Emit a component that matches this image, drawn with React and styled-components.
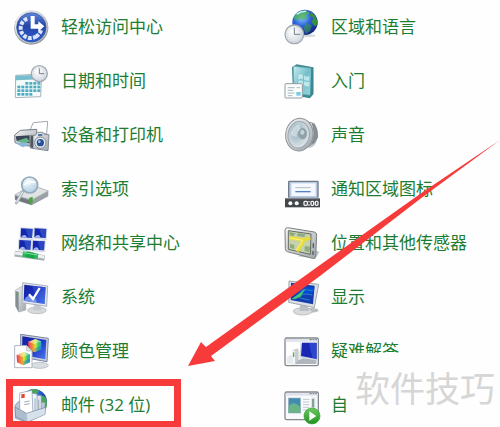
import React from 'react';
import styled, { createGlobalStyle } from 'styled-components';

const GlobalStyle = createGlobalStyle`
    *,
    *::after {
        box-sizing: border-box;
    }

    body {
        margin: 0;
        background: #fff;
        font-family: 'Open Sans', 'Noto Sans CJK SC', sans-serif;
    }
`;

const PageStyled = styled.main`
    position: relative;
    height: 100vh;
    overflow: hidden;
    background: #fefefe;
`;

const ListStyled = styled.ul`
    display: grid;
    grid-template-columns: 54% 46%;
    grid-auto-rows: 54px;
    margin: 0;
    padding: 0;
    list-style: none;
`;

const ItemStyled = styled.li`
    position: relative;
    display: flex;
    align-items: center;
    padding-left: 14px;

    ${({ $marked }) => $marked && `
        &::after {
            content: '';
            position: absolute;
            top: 1px;
            bottom: 4px;
            left: 6px;
            width: 175px;
            border: 7px solid #f73a3a;
            pointer-events: none;
        }
    `}
`;

const LinkStyled = styled.a`
    display: flex;
    align-items: center;
    gap: 12px;
    color: #1c7d31;
    font-size: 17px;
    line-height: 24px;
    white-space: nowrap;
    text-decoration: none;

    &:hover {
        text-decoration: underline;
    }
`;

const IconStyled = styled.svg`
    flex: none;
    width: 35px;
    height: 35px;
    overflow: visible;
`;

const GradientsStyled = styled.svg`
    position: absolute;
    width: 0;
    height: 0;
`;

const ArrowStyled = styled.svg`
    position: absolute;
    top: 0;
    left: 0;
    width: 500px;
    height: 427px;
    pointer-events: none;
`;

const WatermarkStyled = styled.div`
    position: absolute;
    right: 0;
    bottom: 0;
    width: 151px;
    height: 74px;
    padding-left: 6px;
    background: #fefefe;
    color: #d6d6d6;
    font-size: 35px;
    line-height: 72px;
    white-space: nowrap;
`;

function Gradients() {
    return (
        <GradientsStyled aria-hidden="true">
            <defs>
                <linearGradient id="silver" x1="0" y1="0" x2="1" y2="1">
                    <stop offset="0" stopColor="#f6f7f8" />
                    <stop offset="1" stopColor="#9fa5ab" />
                </linearGradient>
                <linearGradient id="screen" x1="0" y1="0" x2="1" y2="1">
                    <stop offset="0" stopColor="#16209a" />
                    <stop offset="0.5" stopColor="#1c32c4" />
                    <stop offset="1" stopColor="#4f7df0" />
                </linearGradient>
                <linearGradient id="blueDisc" x1="0" y1="0" x2="0" y2="1">
                    <stop offset="0" stopColor="#5f86d8" />
                    <stop offset="0.45" stopColor="#2546a8" />
                    <stop offset="1" stopColor="#2c5cd0" />
                </linearGradient>
                <radialGradient id="globe" cx="0.38" cy="0.3" r="0.75">
                    <stop offset="0" stopColor="#8fd4ff" />
                    <stop offset="0.45" stopColor="#2d62dc" />
                    <stop offset="1" stopColor="#101e7c" />
                </radialGradient>
                <radialGradient id="dial" cx="0.4" cy="0.35" r="0.7">
                    <stop offset="0" stopColor="#ffffff" />
                    <stop offset="1" stopColor="#ced6de" />
                </radialGradient>
                <linearGradient id="teal" x1="0" y1="0" x2="1" y2="1">
                    <stop offset="0" stopColor="#c9ecef" />
                    <stop offset="0.5" stopColor="#74bfca" />
                    <stop offset="1" stopColor="#98d4dc" />
                </linearGradient>
                <linearGradient id="rainbow" x1="0" y1="0" x2="1" y2="0">
                    <stop offset="0" stopColor="#e6336c" />
                    <stop offset="0.3" stopColor="#f2a52c" />
                    <stop offset="0.55" stopColor="#d9e83a" />
                    <stop offset="0.8" stopColor="#35c765" />
                    <stop offset="1" stopColor="#27a5e2" />
                </linearGradient>
                <radialGradient id="cone" cx="0.4" cy="0.4" r="0.6">
                    <stop offset="0" stopColor="#8da3af" />
                    <stop offset="0.5" stopColor="#b6c8d1" />
                    <stop offset="1" stopColor="#dbe4e9" />
                </radialGradient>
                <radialGradient id="lens" cx="0.4" cy="0.3" r="0.7">
                    <stop offset="0" stopColor="#f4fbff" />
                    <stop offset="1" stopColor="#a9cbe6" />
                </radialGradient>
                <linearGradient id="play" x1="0" y1="0" x2="0" y2="1">
                    <stop offset="0" stopColor="#67cb5a" />
                    <stop offset="1" stopColor="#219021" />
                </linearGradient>
            </defs>
        </GradientsStyled>
    )
}

function Clock({ cx, cy, r }) {
    return (
        <g>
            <circle cx={cx} cy={cy} r={r} fill="url(#dial)" stroke="#a2a9b0" strokeWidth="4" />
            <circle cx={cx} cy={cy} r={r - 6} fill="none" stroke="#a9b4be" strokeWidth="2" strokeDasharray="2 8" />
            <path d={`M${cx} ${cy - r + 8}V${cy}H${cx + r - 10}`} fill="none" stroke="#75818d" strokeWidth="3" />
        </g>
    )
}

function EaseIcon() {
    return (
        <>
            <circle cx="52" cy="53" r="51" fill="#8c9198" />
            <circle cx="52" cy="51" r="50" fill="url(#silver)" />
            <circle cx="52" cy="52" r="44" fill="url(#blueDisc)" stroke="#3156ae" strokeWidth="2" />
            <path d="M67 79A30 30 0 1 1 40 26" fill="none" stroke="#dce6f8" strokeWidth="12" strokeDasharray="11 4" />
            <path d="M81 61A30 30 0 0 1 65 80" fill="none" stroke="#dce6f8" strokeWidth="12" strokeDasharray="10 4" />
            <path d="M50 18H62V43H73V34L91 49L73 65V56H50Z" fill="#fff" />
        </>
    )
}

function CalendarIcon() {
    const rows = [0, 1, 2, 3];
    const cols = [0, 1, 2, 3, 4, 5];

    return (
        <>
            <path d="M5 34L83 30L80 98L4 101Z" fill="#f4fbfc" stroke="#a9b4bb" strokeWidth="3" />
            <path d="M6 35L82 32V46L5 49Z" fill="#76bdce" />
            {rows.map((row) => cols.slice(row === 0 ? 2 : 0, row === 3 ? 4 : 6).map((col) => (
                <rect key={`${row}-${col}`} x={10 + col * 12} y={54 + row * 11} width="9" height="8" fill="#4fabc0" />
            )))}
            <Clock cx={76} cy={29} r={24} />
        </>
    )
}

function PrinterIcon() {
    return (
        <>
            <path d="M44 45L58 14L101 10L98 47Z" fill="#fff" stroke="#a3a8ad" strokeWidth="3" />
            <path d="M2 51L19 37L68 34V85L31 83L3 74Z" fill="url(#silver)" stroke="#757e87" strokeWidth="3" />
            <path d="M5 55L47 52V76L8 69Z" fill="#384556" />
            <path d="M10 68L38 59L47 70L30 79Z" fill="#66b486" />
            <path d="M5 76L32 73L42 82L26 88Z" fill="#8cb7d8" />
            <path d="M48 52H64L70 43H87L91 49L105 50L102 98L49 90Z" fill="url(#silver)" stroke="#848c95" strokeWidth="3" />
            <path d="M50 53H58V90L49 88Z" fill="#4c5763" />
            <circle cx="79" cy="74" r="17" fill="#e9eef3" stroke="#7e8790" strokeWidth="3" />
            <circle cx="79" cy="74" r="11" fill="#294f94" />
            <circle cx="76" cy="71" r="4" fill="#97bff5" />
            <rect x="72" y="48" width="13" height="6" fill="#5579a8" />
        </>
    )
}

function IndexIcon() {
    return (
        <>
            <path d="M2 70L54 40L103 57V73L53 100L3 84Z" fill="#9aa0a5" />
            <path d="M2 69L52 39L103 57L53 84Z" fill="#e0e2e4" stroke="#a5aaae" strokeWidth="2" />
            <path d="M4 72L52 87V98L4 83Z" fill="#70777d" />
            <path d="M45 78L56 74V92L45 96Z" fill="#42a838" />
            <path d="M28 56L7 93" stroke="#aeb9c1" strokeWidth="9" strokeLinecap="round" />
            <path d="M26 60L8 91" stroke="#eef2f4" strokeWidth="3" />
            <circle cx="47" cy="39" r="24" fill="url(#lens)" fillOpacity="0.85" stroke="#95a9b8" strokeWidth="5" />
            <path d="M31 40Q42 25 65 31" fill="none" stroke="#fff" strokeWidth="5" />
        </>
    )
}

function NetworkIcon() {
    const screens = [[19, 5], [60, 5], [14, 40], [55, 42]];

    return (
        <>
            {screens.map(([x, y]) => (
                <g key={`${x}-${y}`} transform={`translate(${x} ${y})`}>
                    <path d="M0 0L39 2L37 36L-1 32Z" fill="#dce3ed" stroke="#b2bcca" strokeWidth="1" />
                    <path d="M2 2L37 4L35 31L1 29Z" fill="#1526ae" />
                    <path d="M16 3L36 4L35 31L24 30Q19 16 16 3Z" fill="#4468dc" fillOpacity="0.5" />
                    <path d="M2 29Q10 18 17 24L20 30Z" fill="#a4bbf2" />
                </g>
            ))}
            <path d="M2 83L92 96" stroke="#a9b0b5" strokeWidth="17" />
            <path d="M3 81L91 93" stroke="#edf0f1" strokeWidth="9" />
            <path d="M26 84L72 91" stroke="#28b657" strokeWidth="16" />
            <path d="M38 76L61 80V98L37 94Z" fill="#1ba54b" />
            <path d="M28 80L70 87" stroke="#84dda1" strokeWidth="3" />
        </>
    )
}

function SystemIcon() {
    return (
        <>
            <path d="M4 31L25 18L35 22V90L14 96L5 78Z" fill="url(#silver)" stroke="#a2a7ac" strokeWidth="2" />
            <path d="M5 33L14 36V95L5 79Z" fill="#848d94" />
            <circle cx="10" cy="43" r="3" fill="#45b92f" />
            <ellipse cx="69" cy="91" rx="28" ry="10" fill="#d7dadd" stroke="#adb2b6" strokeWidth="2" />
            <path d="M61 72H78L83 91H57Z" fill="#c6cacf" />
            <path d="M26 8L101 18L98 79L24 68Z" fill="#e3e7ec" stroke="#adb3bc" strokeWidth="3" />
            <path d="M31 14L95 22L92 72L29 62Z" fill="url(#screen)" />
            <path d="M54 17L95 22L92 72L68 68Q65 40 54 17Z" fill="#4268de" fillOpacity="0.45" />
            <path d="M29 62Q44 36 64 54L69 68Z" fill="#92aef1" fillOpacity="0.75" />
            <path d="M45 43L57 57L77 24" fill="none" stroke="#fff" strokeWidth="7" />
        </>
    )
}

function Cube({ x, y }) {
    return (
        <g transform={`translate(${x} ${y})`}>
            <path d="M0 9L22 0L40 7V31L20 40L1 31Z" fill="url(#rainbow)" />
            <path d="M0 9L22 0L40 7L19 15Z" fill="#fff" fillOpacity="0.4" />
            <path d="M0 9L19 15L20 40L1 31Z" fill="#e53b55" fillOpacity="0.25" />
            <path d="M20 28L40 20V31L20 40Z" fill="#2672db" fillOpacity="0.45" />
        </g>
    )
}

function ColorIcon() {
    return (
        <>
            <ellipse cx="77" cy="94" rx="26" ry="9" fill="#d8dde1" stroke="#a6b0b8" strokeWidth="2" />
            <path d="M20 1L103 13L99 83L20 69Z" fill="#c7cfdd" stroke="#7c879c" strokeWidth="3" />
            <path d="M25 7L97 18L94 76L24 63Z" fill="url(#screen)" />
            <Cube x={42} y={15} />
            <path d="M2 35H38L54 51V101H2Z" fill="#fff" stroke="#aeb6be" strokeWidth="3" />
            <path d="M38 35V51H54Z" fill="#dce1e5" stroke="#aeb6be" strokeWidth="2" />
            <Cube x={8} y={54} />
        </>
    )
}

function MailIcon() {
    return (
        <>
            <circle cx="60" cy="42" r="39" fill="url(#globe)" />
            <path d="M47 5Q65 0 76 10L68 19L51 20ZM76 21L94 26Q105 48 93 68L80 60L85 45L74 36Z" fill="#48a656" />
            <path d="M3 52L14 40L94 43L91 73L38 103L4 91Z" fill="#bac8d8" stroke="#75899c" strokeWidth="2" />
            <path d="M43 20L82 23V78L43 82Z" fill="#dce4ef" stroke="#8295aa" strokeWidth="2" />
            <path d="M32 13L69 18V81L32 83Z" fill="#f0f4fb" stroke="#8295aa" strokeWidth="2" />
            <path d="M17 15L54 7L57 79L17 81Z" fill="#fff" stroke="#8295aa" strokeWidth="2" />
            <path d="M22 19L32 17V29L22 31Z" fill="#df4932" />
            <path d="M31 42L47 39M31 50L47 47M63 31V73M74 35V71" stroke="#9ba9bc" strokeWidth="3" />
            <path d="M3 57L38 76L95 58L93 79L40 103L5 86Z" fill="#aebdce" stroke="#71869c" strokeWidth="2" />
            <path d="M38 77L40 101L92 79L94 60Z" fill="#d7e1eb" />
        </>
    )
}

function RegionIcon() {
    return (
        <>
            <ellipse cx="63" cy="77" rx="32" ry="5" fill="#d4d8db" />
            <circle cx="63" cy="37" r="38" fill="url(#globe)" />
            <path d="M33 15Q46 0 67 1L77 10L65 17L71 24L55 31L47 24L38 31L29 26Z" fill="#52b551" fillOpacity="0.75" />
            <path d="M81 7Q101 20 101 44L92 49L82 35L89 24L77 18Z" fill="#388f3d" />
            <path d="M66 39L83 46L78 63L65 72L59 53Z" fill="#3b9b46" fillOpacity="0.6" />
            <path d="M38 13Q51 3 66 4" fill="none" stroke="#d8f5ff" strokeWidth="4" />
            <Clock cx={31} cy={73} r={28} />
        </>
    )
}

function StartIcon() {
    return (
        <>
            <path d="M24 10L38 1L88 10V90L77 103L27 93Z" fill="#3e8993" />
            <path d="M28 7L82 13V94L30 88Z" fill="url(#teal)" stroke="#6baab1" strokeWidth="2" />
            <path d="M82 13L88 10V90L78 102Z" fill="#388995" />
            <path d="M43 34Q51 28 57 34V47Q51 42 43 47ZM60 34Q67 40 76 36V49Q68 52 60 47ZM43 51Q51 46 57 51V64Q51 59 43 64ZM60 51Q68 56 76 53V66Q68 69 60 64Z" fill="#d9f4f6" fillOpacity="0.7" />
            <rect x="3" y="59" width="52" height="43" rx="3" fill="#fbfcfc" stroke="#929da3" strokeWidth="3" />
            <rect x="37" y="84" width="13" height="11" fill="#76cde1" />
            <path d="M11 71H32M11 79H28M11 87H31M11 95H25M38 71H48" stroke="#a8b7c1" strokeWidth="3" />
        </>
    )
}

function SoundIcon() {
    return (
        <>
            <ellipse cx="76" cy="51" rx="25" ry="38" fill="#bec3c7" />
            <path d="M63 8L91 16Q103 33 102 58L92 75L68 88Z" fill="#858e94" />
            <path d="M80 15Q93 46 78 79" fill="none" stroke="#d8dcdf" strokeWidth="5" />
            <ellipse cx="46" cy="50" rx="41" ry="49" fill="url(#silver)" stroke="#8d959b" strokeWidth="3" transform="rotate(8 46 50)" />
            <ellipse cx="44" cy="50" rx="32" ry="40" fill="url(#cone)" stroke="#9da6ab" strokeWidth="3" transform="rotate(8 44 50)" />
            <path d="M19 50Q24 25 46 18L50 35Q38 42 38 58Z" fill="#dce6eb" fillOpacity="0.7" />
            <ellipse cx="56" cy="47" rx="13" ry="17" fill="#91a1aa" />
            <ellipse cx="55" cy="43" rx="6" ry="8" fill="#c6d3da" />
        </>
    )
}

function TrayIcon() {
    return (
        <>
            <rect x="12" y="26" width="92" height="52" rx="4" fill="#707b8c" />
            <rect x="16" y="30" width="84" height="47" rx="2" fill="#b8c9e1" />
            <rect x="22" y="34" width="73" height="38" fill="#f5f9ff" />
            <path d="M34 47H80" stroke="#b4bdc9" strokeWidth="3" />
            <path d="M34 59H80" stroke="#557fc5" strokeWidth="4" />
            <rect x="3" y="79" width="105" height="27" fill="#43474c" />
            <path d="M3 80H108" stroke="#858a8f" strokeWidth="3" />
            <circle cx="19" cy="94" r="6" fill="#fff" />
            <circle cx="38" cy="94" r="6" fill="#fff" />
            <g fill="none" stroke="#f1f1f1" strokeWidth="4">
                <rect x="60" y="88" width="10" height="12" rx="3" />
                <rect x="81" y="88" width="8" height="12" rx="3" />
                <rect x="94" y="88" width="8" height="12" rx="3" />
                <path d="M75 87V91M75 97V101" />
            </g>
        </>
    )
}

function SensorIcon() {
    return (
        <>
            <path d="M83 66L106 78L94 98L42 91Z" fill="#c1c4c7" />
            <path d="M11 5L91 18Q98 20 98 27L95 92Q93 99 86 97L10 77Q4 75 4 68L3 13Q4 4 11 5Z" fill="url(#silver)" stroke="#7b807e" strokeWidth="3" />
            <path d="M13 14L81 24L79 85L13 70Z" fill="#c6d2a9" stroke="#636d5f" strokeWidth="3" />
            <path d="M17 18L35 22L28 31L17 28ZM41 21L64 25L61 33L39 30ZM18 53L31 57V69L18 66ZM62 60L78 62L76 79L62 75Z" fill="#8faa84" />
            <path d="M15 35L60 42L39 76M57 42L79 36" fill="none" stroke="#eadd38" strokeWidth="10" />
            <path d="M18 36L56 43L37 72" fill="none" stroke="#fff47c" strokeWidth="3" />
            <path d="M88 52V65M87 75V87" stroke="#555b5d" strokeWidth="4" />
        </>
    )
}

function DisplayIcon() {
    return (
        <>
            <ellipse cx="81" cy="91" rx="23" ry="7" fill="#b9bec1" />
            <ellipse cx="56" cy="94" rx="28" ry="11" fill="#d9dcdf" stroke="#a7adb1" strokeWidth="2" />
            <path d="M49 72H69L75 93H46Z" fill="#b9bec2" />
            <path d="M15 3L104 13L91 83L14 67Z" fill="#dce0e4" stroke="#a1a9b1" strokeWidth="3" />
            <path d="M21 8L92 17L87 73L20 60Z" fill="#143cae" />
            <path d="M28 15L91 23L88 39Q57 48 32 30Z" fill="#0849d2" />
            <path d="M52 31Q67 27 86 32M50 45Q66 39 85 45M47 54L77 60" fill="none" stroke="#1f86d2" strokeWidth="3" />
            <path d="M22 58L64 26L50 50L34 57Z" fill="#46c577" />
        </>
    )
}

function WindowFrame() {
    return (
        <>
            <rect x="3" y="12" width="100" height="83" rx="5" fill="#f9fafb" stroke="#858990" strokeWidth="4" />
            <path d="M5 15H101V23H5Z" fill="#dfe3eb" />
            <path d="M77 17H83M86 17H91M94 17H99" stroke="#68717f" strokeWidth="3" />
        </>
    )
}

function TroubleIcon() {
    return (
        <>
            <WindowFrame />
            <rect x="9" y="25" width="88" height="64" fill="#e6e9ee" />
            <path d="M9 25H48V49L9 69Z" fill="#fff" />
            <path d="M25 48L43 43V91H25Z" fill="#c9cdd2" />
            <path d="M25 49L33 51V91H25Z" fill="#f4f6f7" />
            <rect x="27" y="55" width="4" height="14" fill="#58b04b" />
            <path d="M50 29H99V79L48 70Z" fill="#cfd5df" />
            <path d="M54 26H98V75L51 66Z" fill="#1828b4" />
            <path d="M75 27H98V75L85 72Z" fill="#3a56d9" fillOpacity="0.65" />
            <path d="M40 80L58 73L97 79V90H34Z" fill="#afb6be" />
        </>
    )
}

function PlayIcon() {
    return (
        <>
            <WindowFrame />
            <rect x="13" y="30" width="37" height="45" fill="#418db1" stroke="#a6b8c3" strokeWidth="2" />
            <path d="M14 56Q27 34 49 58V74H14Z" fill="#69b588" />
            <path d="M57 34H76M57 42H76M57 50H76M57 58H76M57 66H73" stroke="#c0c9cf" strokeWidth="3" />
            <rect x="82" y="29" width="12" height="33" fill="#d4dbe2" />
            <path d="M87 33V58" stroke="#58846b" strokeWidth="4" />
            <circle cx="84" cy="84" r="24" fill="url(#play)" stroke="#3b9c39" strokeWidth="2" />
            <path d="M76 70L97 84L76 98Z" fill="#fff" />
        </>
    )
}

// listed left to right, row by row
const items = [
    { label: '轻松访问中心', Icon: EaseIcon },
    { label: '区域和语言', Icon: RegionIcon },
    { label: '日期和时间', Icon: CalendarIcon },
    { label: '入门', Icon: StartIcon },
    { label: '设备和打印机', Icon: PrinterIcon },
    { label: '声音', Icon: SoundIcon },
    { label: '索引选项', Icon: IndexIcon },
    { label: '通知区域图标', Icon: TrayIcon },
    { label: '网络和共享中心', Icon: NetworkIcon },
    { label: '位置和其他传感器', Icon: SensorIcon },
    { label: '系统', Icon: SystemIcon },
    { label: '显示', Icon: DisplayIcon },
    { label: '颜色管理', Icon: ColorIcon },
    { label: '疑难解答', Icon: TroubleIcon },
    { label: '邮件 (32 位)', Icon: MailIcon, marked: true },
    { label: '自', Icon: PlayIcon },
];

function App() {
    return (
        <PageStyled>

            <GlobalStyle />
            <Gradients />

            <ListStyled>
                {items.map(({ label, Icon, marked }) => (
                    <ItemStyled key={label} $marked={marked}>

                        <LinkStyled href="#">

                            <IconStyled viewBox="0 0 105 105" aria-hidden="true">
                                <Icon />
                            </IconStyled>

                            {label}

                        </LinkStyled>

                    </ItemStyled>
                ))}
            </ListStyled>

            <ArrowStyled viewBox="0 0 500 427" aria-hidden="true">
                <path d="M500 140L420 194L320 265L206 347L201 342L188 366L215 361L211 356L320 276L420 199Z" fill="#f73a3a" />
            </ArrowStyled>

            <WatermarkStyled>软件技巧</WatermarkStyled>

        </PageStyled>
    )
}

export default App;
